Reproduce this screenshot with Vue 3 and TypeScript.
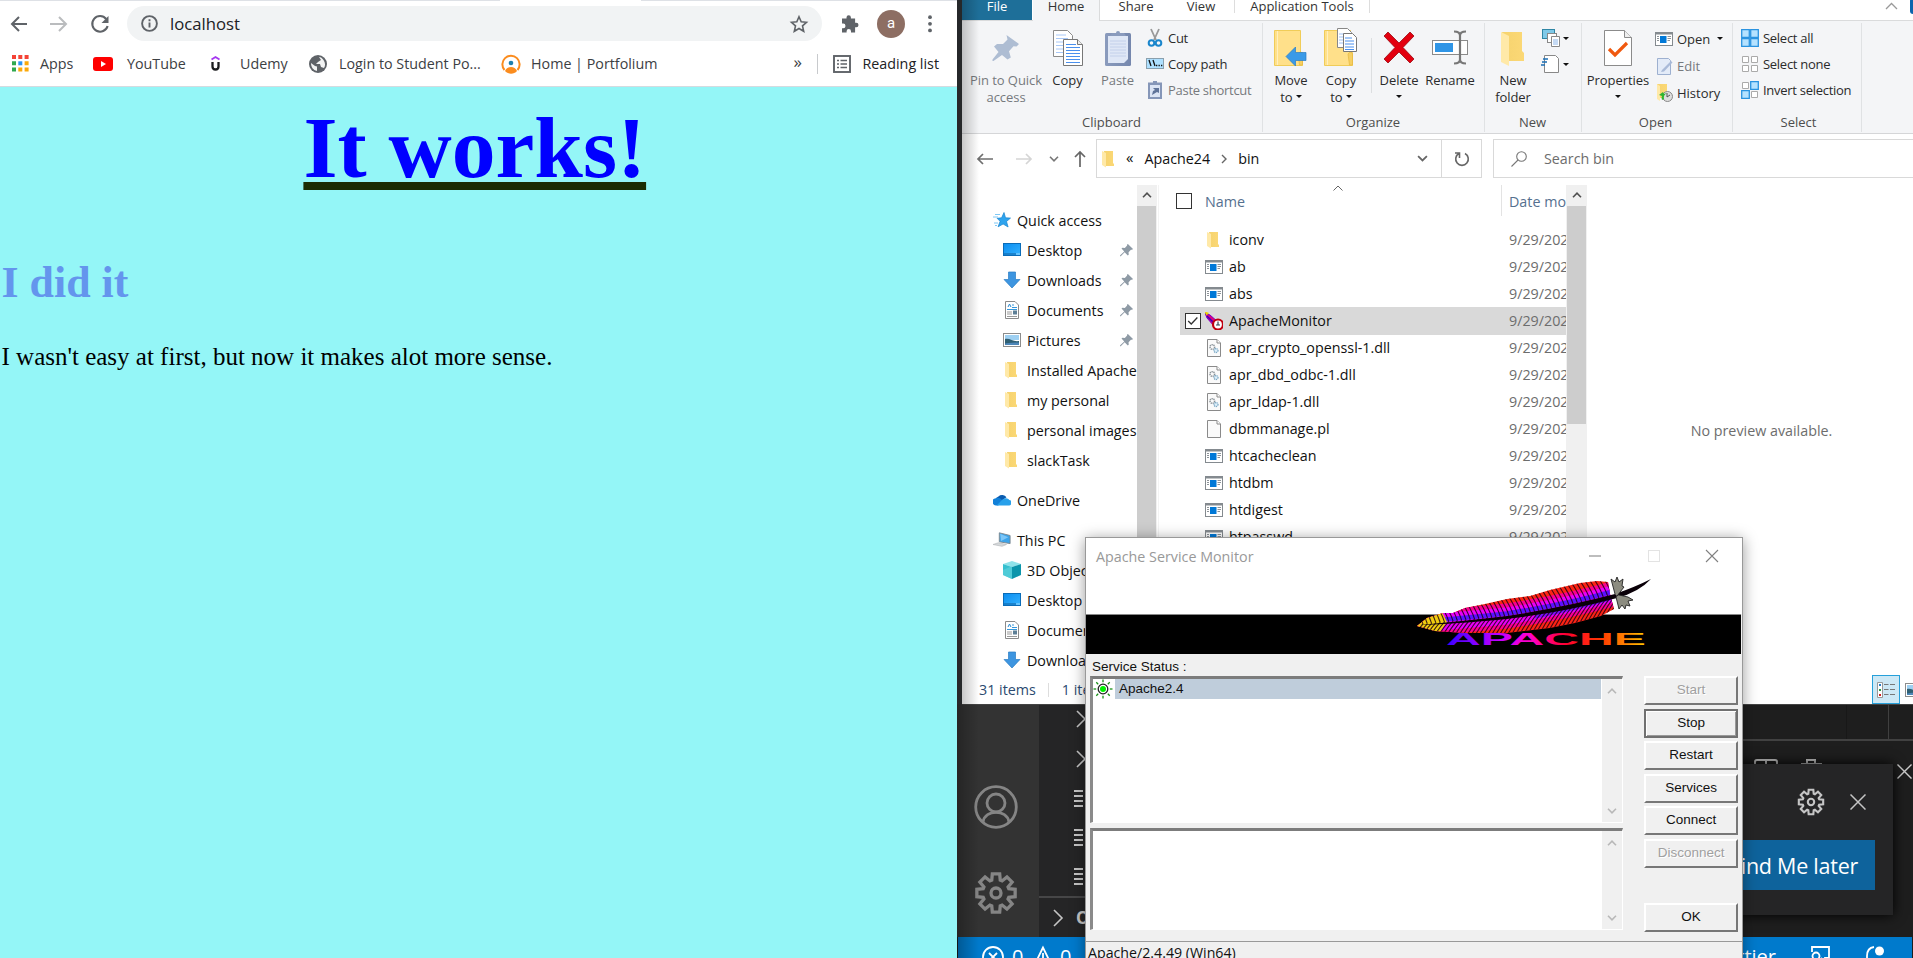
<script setup lang="ts">
interface NavItem { label: string; icon: string; root?: boolean; pinned?: boolean; gap?: boolean }
interface FileRow { name: string; icon: string; selected?: boolean }
interface DialogButton { label: string; disabled?: boolean; primary?: boolean; apart?: boolean }

const nav: NavItem[] = [
  { label: 'Quick access', icon: 'quick', root: true },
  { label: 'Desktop', icon: 'desktop', pinned: true },
  { label: 'Downloads', icon: 'download', pinned: true },
  { label: 'Documents', icon: 'document', pinned: true },
  { label: 'Pictures', icon: 'picture', pinned: true },
  { label: 'Installed Apache', icon: 'folder' },
  { label: 'my personal', icon: 'folder' },
  { label: 'personal images', icon: 'folder' },
  { label: 'slackTask', icon: 'folder' },
  { label: 'OneDrive', icon: 'onedrive', root: true, gap: true },
  { label: 'This PC', icon: 'pc', root: true, gap: true },
  { label: '3D Objects', icon: 'cube' },
  { label: 'Desktop', icon: 'desktop' },
  { label: 'Documents', icon: 'document' },
  { label: 'Downloads', icon: 'download' },
]

const files: FileRow[] = [
  { name: 'iconv', icon: 'folder' },
  { name: 'ab', icon: 'exe' },
  { name: 'abs', icon: 'exe' },
  { name: 'ApacheMonitor', icon: 'monitor', selected: true },
  { name: 'apr_crypto_openssl-1.dll', icon: 'dll' },
  { name: 'apr_dbd_odbc-1.dll', icon: 'dll' },
  { name: 'apr_ldap-1.dll', icon: 'dll' },
  { name: 'dbmmanage.pl', icon: 'page' },
  { name: 'htcacheclean', icon: 'exe' },
  { name: 'htdbm', icon: 'exe' },
  { name: 'htdigest', icon: 'exe' },
  { name: 'htpasswd', icon: 'exe' },
]

const buttons: DialogButton[] = [
  { label: 'Start', disabled: true },
  { label: 'Stop', primary: true },
  { label: 'Restart' },
  { label: 'Services' },
  { label: 'Connect' },
  { label: 'Disconnect', disabled: true },
  { label: 'OK', apart: true },
]

// Outline of an eight-toothed gear centred on the origin.
function gear(inner: number, outer: number): string {
  const pts: string[] = []
  for (let i = 0; i < 8; i++) {
    const a = (i * Math.PI) / 4
    for (const [da, r] of [[-0.32, inner], [-0.19, outer], [0.19, outer], [0.32, inner]]) {
      pts.push(`${(Math.sin(a + da) * r).toFixed(2)},${(-Math.cos(a + da) * r).toFixed(2)}`)
    }
  }
  return `M${pts.join('L')}Z`
}
const gearPath = gear(13.5, 19.5)

// Height of the quill at a given x, used as the root of every barb.
function spine(x: number): number {
  const pts = [[0, 49], [50, 44], [92, 40], [135, 34], [178, 25], [212, 15.7]]
  for (let i = 1; i < pts.length; i++) {
    if (x <= pts[i][0]) {
      const t = (x - pts[i - 1][0]) / (pts[i][0] - pts[i - 1][0])
      return pts[i - 1][1] + t * (pts[i][1] - pts[i - 1][1])
    }
  }
  return 15
}
const barbs = Array.from({ length: 50 }, (_, i) => {
  const x = 8 + i * 4.3
  const y = spine(x)
  return `M${x} ${y}q-3 -10 -13 -24M${x} ${y}q-6 6 -15 22`
}).join('')

const rays = [0, 45, 90, 135, 180, 225, 270, 315]
</script>

<template>
  <div class="screen">
    <svg class="defs" aria-hidden="true">
      <defs>
        <linearGradient id="gFolder" x1="0" x2="1"><stop offset="0" stop-color="#f6d36e" /><stop offset="1" stop-color="#fbd876" /></linearGradient>
        <linearGradient id="gDesk" x1="0" y1="0" x2="1" y2="1"><stop offset="0" stop-color="#0a8df0" /><stop offset="1" stop-color="#35b2ff" /></linearGradient>
        <linearGradient id="gApache" x1="0" x2="1">
          <stop offset="0" stop-color="#3a00ff" /><stop offset=".28" stop-color="#c800ff" /><stop offset=".42" stop-color="#ff00c8" />
          <stop offset=".6" stop-color="#ff0030" /><stop offset=".78" stop-color="#ff3a00" /><stop offset="1" stop-color="#ffc800" />
        </linearGradient>
        <linearGradient id="gClip" x1="0" x2="1"><stop offset="0" stop-color="#8a9bbd" /><stop offset="1" stop-color="#7587ad" /></linearGradient>
        <clipPath id="cFeather"><path d="M2 50L12 42L28 37L38 37L50 32L70 28L92 23L115 20L135 14L165 7L182 5L193 6L195 18L199 33L186 40L160 47L135 52L92 57L50 57L20 55Z" /></clipPath>
      </defs>
      <symbol id="i-folder" viewBox="0 0 18 18"><path d="M4 1h9v12l1 1v2H5z" fill="url(#gFolder)" /><path d="M2 1l4 2v14.500L2 15z" fill="#ffe9a8" /></symbol>
      <symbol id="i-exe" viewBox="0 0 18 18"><rect x=".5" y="2.500" width="17" height="13" fill="#fff" stroke="#848a8f" /><path d="M0 2h18v2.500H0z" fill="#848a8f" /><rect x="5" y="6" width="6.500" height="7" fill="#0078d7" /><path d="M2 6.500h2M2 8.500h2M2 10.500h2M12.500 6.500H16M12.500 8.500H16M12.500 10.500H15" stroke="#8d9398" /></symbol>
      <symbol id="i-page" viewBox="0 0 18 18"><path d="M2.500.5h9.500l3.500 3.500v13.500h-13z" fill="#fafafa" stroke="#8a8a8a" /><path d="M12 .5V4h3.500" fill="#fff" stroke="#8a8a8a" /></symbol>
      <symbol id="i-dll" viewBox="0 0 18 18"><path d="M2.500.5h9.500l3.500 3.500v13.500h-13z" fill="#fafafa" stroke="#8a8a8a" /><path d="M12 .5V4h3.500" fill="#fff" stroke="#8a8a8a" /><circle cx="7.300" cy="8" r="2.300" fill="none" stroke="#8a9298" stroke-dasharray="1.200 .6" stroke-width="1.500" /><circle cx="11" cy="11.500" r="2" fill="#dff0fa" stroke="#7aa7c4" stroke-dasharray="1.200 .6" stroke-width="1.300" /></symbol>
      <symbol id="i-monitor" viewBox="0 0 18 18"><path d="M0 1l2 5 7 8 4-4-8-7z" fill="#e0007a" stroke="#7a00c8" /><path d="M-1-1l5 2-2.500 2.500z" fill="#e8d400" /><path d="M2 4l8 8" stroke="#3a00c0" stroke-width="1.500" /><circle cx="13" cy="12.500" r="5" fill="#fff" stroke="#c00010" stroke-width="2.200" /><path d="M13 9.500v4M11 13h4" stroke="#345" stroke-width="1.200" /></symbol>
      <symbol id="i-quick" viewBox="0 0 18 18"><path d="M11 1.500l1.500 5.300 5 .3-4 3.400 1.600 5.500-5-3-5 2.800 2-5.500-3-3 4.500-.5z" fill="#2fa4ee" stroke="#1583cf" stroke-width=".7" /><path d="M2 3.500h5M0 6h5M1 12h4M2 14.500h2" stroke="#7ec8f5" /></symbol>
      <symbol id="i-desktop" viewBox="0 0 18 18"><rect x=".5" y="2.500" width="17" height="12" fill="url(#gDesk)" stroke="#0a6cb8" /><path d="M1 13h12" stroke="#0f5f9e" /><path d="M13.500 13h1M15.500 13h1" stroke="#fff" /></symbol>
      <symbol id="i-download" viewBox="0 0 18 18"><path d="M5.500 1h7v7.500H17L9 17 1 8.500h4.500z" fill="#3d95e0" stroke="#2a7cc4" stroke-width=".7" /></symbol>
      <symbol id="i-document" viewBox="0 0 18 18"><path d="M2.500.5h9.500l3.500 3.500v13.500h-13z" fill="#fff" stroke="#8a8a8a" /><path d="M5 6l1.500-3L8 6" fill="none" stroke="#2a8ad0" /><path d="M9 4h2M9 6.500h5M4 8.500h10" stroke="#3597dc" /><path d="M4 11h5M4 13h5M4 15.500h10" stroke="#999" /><rect x="10" y="9.500" width="4" height="4" fill="#5d7f96" /></symbol>
      <symbol id="i-picture" viewBox="0 0 18 18"><rect x=".5" y="2.500" width="17" height="13" fill="#fff" stroke="#8c8c8c" /><rect x="2" y="4" width="14" height="5" fill="#9ed0f2" /><path d="M2 8c5-1 8 3 14 2v4H2z" fill="#2f5f73" /><path d="M2 12.500c5-1 9-1 14-1V14H2z" fill="#4d86b8" /></symbol>
      <symbol id="i-onedrive" viewBox="0 0 20 14"><path d="M3 7a4.500 4.500 0 0 1 3-4A6 6 0 0 1 15 4L8 9z" fill="#0a5cb0" /><path d="M4 13a4 4 0 0 1-1-8c3-1 5 0 7 2l-4 6z" fill="#1180d8" /><path d="M10 7c4-4 8-1 8 0a3 3 0 0 1-1 6H4z" fill="#28a0ea" /></symbol>
      <symbol id="i-pc" viewBox="0 0 20 18"><path d="M7 1l12 3v9L7 11z" fill="#3da4ea" stroke="#7d868c" /><path d="M8 2l9 4-8 4z" fill="#7cc6f8" /><path d="M0 14l6-2 9 2-5 2z" fill="#d5d8da" stroke="#a9adb0" stroke-width=".6" /></symbol>
      <symbol id="i-cube" viewBox="0 0 18 18"><path d="M9 0l9 3-9 3-9-3z" fill="#8fe3ea" /><path d="M0 3l9 3v12l-9-4z" fill="#35c0cf" /><path d="M18 3L9 6v12l9-4z" fill="#0b95ab" /><path d="M0 9l9-4v13l-9-4z" fill="#69d6e0" opacity=".5" /></symbol>
      <symbol id="i-pin" viewBox="0 0 14 14"><path d="M8.500 0L14 5.500l-1 .8-1.200-.1-2.600 2.700.2 2.600-1 .9L5 9 .8 13.200 0 13.200l.2-1L4.600 8 1.600 4.900l1-.9 2.600.3 2.500-2.600-.2-1z" /></symbol>
      <symbol id="i-chev" viewBox="0 0 10 6"><path d="M1 .8l4 4 4-4" fill="none" stroke="currentColor" stroke-width="1.600" /></symbol>
      <symbol id="i-close" viewBox="0 0 16 16"><path d="M.5.5l15 15M15.500.5l-15 15" stroke="currentColor" stroke-width="1.500" /></symbol>
      <symbol id="i-gear" viewBox="-22 -22 44 44"><path :d="gearPath" fill="none" stroke="currentColor" stroke-width="3.300" /><circle r="5" fill="none" stroke="currentColor" stroke-width="3.300" /></symbol>
      <symbol id="i-bigfolder" viewBox="0 0 36 38"><path d="M1.500 1.500h26v22h2v13h-28z" fill="#ffe08a" stroke="#f0cc58" /><path d="M4.500 2v34" stroke="#fff0bd" /><path d="M25 25q3-4 4.500 0v11h-3z" fill="#f6cf63" stroke="#e5b840" stroke-width=".7" /></symbol>
    </svg>

    <!-- Code editor -->
    <section class="code">
      <div class="code-main">
        <div class="activity">
          <svg width="44" height="44" viewBox="-22 -22 44 44" fill="none" stroke="currentColor" stroke-width="2.800"><circle r="20.300" /><circle cy="-4" r="9" /><path d="M-13 15C-11 2 11 2 13 15" /></svg>
          <svg width="44" height="44"><use href="#i-gear" /></svg>
        </div>
        <div class="side">
          <div class="side-row first"><svg width="10" height="18" viewBox="0 0 10 18"><path d="M1 1l8 8-8 8" fill="none" stroke="currentColor" stroke-width="1.600" /></svg></div>
          <div class="side-row"><svg width="10" height="18" viewBox="0 0 10 18"><path d="M1 1l8 8-8 8" fill="none" stroke="currentColor" stroke-width="1.600" /></svg></div>
          <div v-for="n in 3" :key="n" class="side-row lines"><svg width="9" height="17" viewBox="0 0 9 17"><path d="M0 1h9M0 6h9M0 11h9M0 16h9" stroke="currentColor" stroke-width="2" /></svg></div>
          <div class="outline-row"><svg width="10" height="18" viewBox="0 0 10 18"><path d="M1 1l8 8-8 8" fill="none" stroke="currentColor" stroke-width="1.600" /></svg><b>OUTLINE</b></div>
        </div>
        <div class="editor">
          <div class="editor-top"><i class="tabshade"></i></div>
          <div class="panel-head">
            <svg width="24" height="24" viewBox="0 0 24 24"><path d="M1 24V3q0-2 2-2h18q2 0 2 2v21M12 1v23" fill="none" stroke="currentColor" stroke-width="2" /></svg>
            <svg width="21" height="24" viewBox="0 0 21 24"><path d="M6 5V1h8v4M0 5h21M3 5v19h15V5" fill="none" stroke="currentColor" stroke-width="2" /></svg>
            <svg class="panel-x" width="15" height="15"><use href="#i-close" /></svg>
          </div>
          <div class="toast">
            <div class="toast-icons"><svg width="28" height="28"><use href="#i-gear" /></svg><svg width="16" height="16"><use href="#i-close" /></svg></div>
            <div class="toast-btn">Remind Me later</div>
          </div>
        </div>
      </div>
      <div class="statusbar">
        <svg width="22" height="22" viewBox="-11 -11 22 22" fill="none" stroke="#fff" stroke-width="1.800"><circle r="10" /><path d="M-4-4L4 4M4-4L-4 4" /></svg><span class="zero">0</span>
        <svg width="18" height="20" viewBox="0 0 18 20" fill="none" stroke="#fff" stroke-width="1.800"><path d="M9 1.500L1 18h16zM9 7v6" /></svg><span class="zero">0</span>
        <span class="prettier">Prettier</span>
        <svg class="feedback" width="21" height="22" viewBox="0 0 21 22" fill="none" stroke="#fff" stroke-width="1.800"><path d="M3 6V1h17v11h-4v4l-4-4" /><circle cx="7" cy="10" r="3.500" /><path d="M1 22q0-7 6-7t6 7" /></svg>
        <svg width="20" height="22" viewBox="0 0 20 22" fill="none" stroke="#fff" stroke-width="1.800"><path d="M9 1Q2 2 2 10v7l-2 4h18l-2-4v-5" /><circle cx="14.500" cy="5" r="4.500" fill="#fff" stroke="none" /></svg>
      </div>
    </section>

    <!-- File explorer -->
    <section class="explorer">
      <div class="tabs">
        <span class="tab file">File</span><span class="tab home">Home</span><span class="tab share">Share</span><span class="tab view">View</span><span class="tab app">Application Tools</span>
        <svg class="collapse" width="13" height="8" viewBox="0 0 13 8"><path d="M1 7l5.500-5.500L12 7" fill="none" stroke="#999" stroke-width="1.300" /></svg><i class="help"></i>
      </div>
      <div class="ribbon">
        <div class="group clipboard">
          <div class="tools">
            <div class="big faded wpin"><svg width="38" height="38" viewBox="0 0 38 38" fill="#aebdd3"><path d="M19.500 6L32 15l-2.500 2.500-3-.3-4.500 5 1.800 6.300-3.300 2-5.500-4.500L6.500 32H5.500v-1.500L11.500 23l-4.500-5.500 3-2.500h6l4.500-4.500z" /></svg><span>Pin to Quick<br>access</span></div>
            <div class="big wcopy"><svg width="32" height="38" viewBox="0 0 32 38"><path d="M1.500 1.500h14l5 5v21h-19z" fill="#fff" stroke="#8b8b8b" /><path d="M4 6h10M4 9.500h12M4 13h12M4 16.500h12M4 20h12M4 23.500h12" stroke="#a8c8f8" /><path d="M11.500 10.500h14l5 5v21h-19z" fill="#fff" stroke="#777" /><path d="M25.500 10.500v5h5" fill="#eee" stroke="#777" /><path d="M14 15.500h10M14 18.500h14M14 21.500h14M14 24.500h14M14 27.500h14M14 30.500h14M14 33.500h14" stroke="#4a90ee" /></svg><span>Copy</span></div>
            <div class="big faded wpaste"><svg width="28" height="38" viewBox="0 0 28 38"><rect x="1" y="4" width="26" height="33" rx="1.500" fill="url(#gClip)" /><path d="M4 7h20v23l-4 4H4z" fill="#dfe7f6" /><path d="M6 12h16M6 15h16M6 18h16M6 21h16M6 24h16M6 27h16" stroke="#c3d0ea" /><path d="M6 7l2-3h4a2 2 0 0 1 4 0h4l2 3z" fill="#8a9bbd" /></svg><span>Paste</span></div>
            <div class="small-col wclip">
              <div><svg width="18" height="18" viewBox="0 0 18 18" fill="none"><path d="M5 0l5 11M13 0L8 11" stroke="#999" stroke-width="1.800" /><circle cx="5.500" cy="14" r="2.800" stroke="#1a86cc" stroke-width="2" /><circle cx="12.500" cy="14" r="2.800" stroke="#1a86cc" stroke-width="2" /></svg>Cut</div>
              <div><svg width="18" height="18" viewBox="0 0 18 18"><rect x=".5" y="3.500" width="17" height="10" fill="#aee0ff" stroke="#8aa0ae" /><path d="M3 5l2 6M7 5l2 6M10 10.500h1.300M12.500 10.500h1.300M15 10.500h1.300" stroke="#111" stroke-width="1.300" /></svg>Copy path</div>
              <div class="faded"><svg width="18" height="18" viewBox="0 0 18 18"><rect x="2" y="1.500" width="14" height="16.500" fill="#8596b8" /><rect x="4" y="4" width="10" height="12" fill="#dbe4f4" /><path d="M7 0h4v3H7z" fill="#8596b8" /><path d="M6 14l1-4 2-1-2-2h6v5l-2-1z" fill="#5f7399" /></svg>Paste shortcut</div>
            </div>
          </div><div class="label">Clipboard</div>
        </div>
        <div class="group organize">
          <div class="tools">
            <div class="big w48"><svg width="36" height="38" viewBox="0 0 36 38"><use href="#i-bigfolder" width="36" height="38" /><path d="M13 27.500l9.500-9.500v5.500H33v8H22.500V37z" fill="#3a9ae8" stroke="#2a7cc4" stroke-width=".7" /></svg><span>Move<br>to <i class="tri"></i></span></div>
            <div class="big w52"><svg width="36" height="38" viewBox="0 0 36 38"><use href="#i-bigfolder" width="36" height="38" /><path d="M14.500-.5h10l4 4v15h-14z" fill="#fff" stroke="#888" /><path d="M16 5h8M16 8h8M16 11h8M16 14h8" stroke="#9fc2f5" /><path d="M20.500 4.500h9l4 4v14h-13z" fill="#fff" stroke="#777" /><path d="M22 9h7M22 12h9M22 15h9M22 18h9M22 20.500h9" stroke="#4a90ee" /></svg><span>Copy<br>to <i class="tri"></i></span></div>
            <i class="vsep"></i>
            <div class="big w48"><svg width="36" height="38" viewBox="0 0 36 38"><path d="M3 7l4-4 11 11L29 3l4 4-11 11.500L33 30l-4 4-11-11L7 34l-4-4 11-11.500z" fill="#e3000f" stroke="#9b0a12" stroke-width=".8" /></svg><span>Delete<br><i class="tri"></i></span></div>
            <div class="big w54"><svg width="38" height="38" viewBox="0 0 38 38"><rect x="1.500" y="11.500" width="35" height="14" fill="#fff" stroke="#8a8a8a" /><rect x="4" y="14" width="18" height="9" fill="#2f95e6" /><path d="M23 2.500q6 0 6 4 0-4 6-4M29 5v27M23 34.500q6 0 6-4 0 4 6 4" fill="none" stroke="#777" stroke-width="2.200" /></svg><span>Rename</span></div>
          </div><div class="label">Organize</div>
        </div>
        <div class="group new">
          <div class="tools">
            <div class="big w48"><svg width="28" height="38" viewBox="0 0 28 38"><path d="M3 3h20v19l2 2v8H8z" fill="url(#gFolder)" /><path d="M2 3l8 4v30L2 33z" fill="#ffe9a8" /></svg><span>New<br>folder</span></div>
            <div class="small-col wnew">
              <div><svg width="20" height="18" viewBox="0 0 20 18"><rect x="1.500" y=".5" width="12" height="9" fill="#7fc9e8" stroke="#2f86a5" /><rect x="6.500" y="4.500" width="9" height="9" fill="#fff" stroke="#888" /><path d="M10.500 7.500h8v10h-8z" fill="#fff" stroke="#888" /><path d="M12 11h5M12 13h5M12 15h5" stroke="#8ab4e8" /></svg><i class="tri"></i></div>
              <div><svg width="20" height="18" viewBox="0 0 20 18"><path d="M3.500.5h11l3 3v14h-14z" fill="#fff" stroke="#888" /><path d="M2 4h5M1 7h5M0 10h4" stroke="#1b6fb5" stroke-width="1.300" /></svg><i class="tri"></i></div>
            </div>
          </div><div class="label">New</div>
        </div>
        <div class="group open">
          <div class="tools">
            <div class="big w68"><svg width="30" height="38" viewBox="0 0 30 38"><path d="M1.500 1.500h20l7 7v28h-27z" fill="#fff" stroke="#8b8b8b" /><path d="M21.500 1.500v7h7" fill="#eee" stroke="#8b8b8b" /><path d="M6 20l6 6 12-12" fill="none" stroke="#f0590f" stroke-width="3.200" /></svg><span>Properties<br><i class="tri"></i></span></div>
            <div class="small-col wopen">
              <div><svg width="18" height="18"><use href="#i-exe" /></svg>Open<i class="tri far"></i></div>
              <div class="faded"><svg width="18" height="18" viewBox="0 0 18 18"><path d="M2.500 1.500h11l2 2v14h-13z" fill="#e3ebf8" stroke="#9db0d0" /><path d="M7 13L16 4l1.500 1.500L9 14.500 6 15z" fill="#a9bad8" /></svg>Edit</div>
              <div><svg width="18" height="18" viewBox="0 0 18 18"><path d="M2 0h10v14H3z" fill="url(#gFolder)" /><path d="M2 0l3 2v15l-3-2z" fill="#ffe9a8" /><circle cx="12.500" cy="12.500" r="5" fill="#ddd" stroke="#888" /><path d="M12 9v4l3-2" stroke="#555" fill="none" /><path d="M4 11l4-3 1 2 3-1q-4 2-3 6l-2 1q-1-3 0-4z" fill="#2fb52f" /></svg>History</div>
            </div>
          </div><div class="label">Open</div>
        </div>
        <div class="group select">
          <div class="tools">
            <div class="small-col wsel">
              <div><svg width="18" height="18" viewBox="0 0 18 18" fill="#b5e2ff" stroke="#2a93e0" stroke-width="1.300"><path d="M.7.7h7.600v7.600H.7zM9.700.7h7.600v7.600H9.700zM.7 9.700h7.600v7.600H.7zM9.700 9.700h7.600v7.600H9.700z" /></svg>Select all</div>
              <div><svg width="18" height="18" viewBox="0 0 18 18" fill="#fff" stroke="#aaa"><path d="M1.500 1.500h6v6h-6zM10.500 1.500h6v6h-6zM1.500 10.500h6v6h-6zM10.500 10.500h6v6h-6z" /></svg>Select none</div>
              <div><svg width="18" height="18" viewBox="0 0 18 18" fill="#fff" stroke="#aaa"><path d="M1.500 1.500h6v6h-6zM10.500 10.500h6v6h-6z" /><path d="M9.700.7h7.600v7.600H9.700zM.7 9.700h7.600v7.600H.7z" fill="#b5e2ff" stroke="#2a93e0" stroke-width="1.300" /></svg>Invert selection</div>
            </div>
          </div><div class="label">Select</div>
        </div>
      </div>

      <div class="address-row">
        <svg class="a-back" width="16" height="12" viewBox="0 0 16 12" fill="none" stroke="#6e6e6e" stroke-width="1.700"><path d="M1 6h15M6 1L1 6l5 5" /></svg>
        <svg class="a-fwd" width="16" height="12" viewBox="0 0 16 12" fill="none" stroke="#d5d5d5" stroke-width="1.700"><path d="M0 6h15M10 1l5 5-5 5" /></svg>
        <svg class="a-hist" width="10" height="6"><use href="#i-chev" /></svg>
        <svg class="a-up" width="12" height="16" viewBox="0 0 12 16" fill="none" stroke="#666" stroke-width="1.700"><path d="M6 16V1M1 6l5-5 5 5" /></svg>
        <div class="address">
          <svg width="18" height="18"><use href="#i-folder" /></svg><span class="laquo">«</span><span class="crumb">Apache24</span>
          <svg class="sep" width="6" height="10" viewBox="0 0 6 10"><path d="M1 1l4 4-4 4" fill="none" stroke="#666" stroke-width="1.400" /></svg><span class="crumb">bin</span>
          <svg class="drop" width="11" height="7"><use href="#i-chev" /></svg>
          <div class="refresh"><svg width="16" height="16" viewBox="0 0 16 16" fill="none" stroke="#666" stroke-width="1.600"><path d="M11 2.500a6.300 6.300 0 1 1-6 0M5.500 7V2H1" /></svg></div>
        </div>
        <div class="search"><svg width="16" height="16" viewBox="0 0 16 16" fill="none" stroke="#777" stroke-width="1.100"><circle cx="10.500" cy="5.500" r="4.800" /><path d="M7 9l-6.500 6.500" /></svg>Search bin</div>
      </div>

      <div class="body">
        <div class="nav">
          <div v-for="(n, i) in nav" :key="i" class="nav-row" :class="{ root: n.root, gap: n.gap }">
            <svg width="18" height="18"><use :href="'#i-' + n.icon" /></svg><span>{{ n.label }}</span>
            <svg v-if="n.pinned" class="pin" width="13" height="13" fill="#8e9aa5"><use href="#i-pin" /></svg>
          </div>
        </div>
        <div class="scroll nav-scroll"><div class="arrow"><svg width="10" height="6"><use href="#i-chev" /></svg></div><div class="thumb"></div></div>
        <div class="list">
          <svg class="sort" width="10" height="6" viewBox="0 0 10 6"><path d="M.5 5.500L5 1l4.500 4.500" fill="none" stroke="#666" /></svg>
          <div class="list-head"><i class="box"></i><span class="name">Name</span><span class="date">Date modified</span></div>
          <div v-for="f in files" :key="f.name" class="file-row" :class="{ selected: f.selected }">
            <span class="check"><svg v-if="f.selected" class="box" width="16" height="16" viewBox="0 0 16 16"><path d="M2.500 8l3.500 3.500 7-7.500" fill="none" stroke="#333" stroke-width="1.500" /></svg></span>
            <svg width="18" height="18"><use :href="'#i-' + f.icon" /></svg><span class="fname">{{ f.name }}</span><span class="fdate">9/29/2021</span>
          </div>
        </div>
        <div class="scroll list-scroll"><div class="arrow"><svg width="10" height="6"><use href="#i-chev" /></svg></div><div class="thumb"></div></div>
        <div class="preview">No preview available.</div>
      </div>
      <div class="foot">
        <span>31 items</span><i></i><span>1 item selected</span>
        <div class="viewbtn"><svg width="18" height="16" viewBox="0 0 18 16"><path d="M.5.5h5v15h-5z" fill="#fff" stroke="#999" /><path d="M2 3h2" stroke="#2a7cc4" stroke-width="2" /><path d="M2 8h2" stroke="#2a9a4a" stroke-width="2" /><path d="M2 13h2" stroke="#d02020" stroke-width="2" /><path d="M7 2.500h4.500M13 2.500h5M7 7.500h4.500M13 7.500h5M7 12.500h4.500M13 12.500h5" stroke="#777" stroke-width="1.200" /></svg></div>
        <svg class="thumbs" width="18" height="18"><use href="#i-picture" /></svg>
      </div>
    </section>

    <!-- Browser -->
    <section class="browser">
      <div class="edge"><i></i></div>
      <div class="toolbar">
        <svg class="t-back" width="18" height="16" viewBox="0 0 18 16" fill="none" stroke="#5f6368" stroke-width="2"><path d="M2 8h15M9 1L2 8l7 7" /></svg>
        <svg class="t-fwd" width="18" height="16" viewBox="0 0 18 16" fill="none" stroke="#babcbe" stroke-width="2"><path d="M0 8h15M9 1l7 7-7 7" /></svg>
        <svg class="t-load" width="18" height="18" viewBox="0 0 18 18"><path d="M15.200 4A7.800 7.800 0 1 0 16.600 11" fill="none" stroke="#5f6368" stroke-width="2.100" /><path d="M17.500 1v7h-7z" fill="#5f6368" /></svg>
        <div class="omnibox">
          <svg width="17" height="17" viewBox="0 0 17 17"><circle cx="8.500" cy="8.500" r="7.400" fill="none" stroke="#5f6368" stroke-width="1.900" /><path d="M8.500 7.500v5M8.500 4.300v2" stroke="#5f6368" stroke-width="1.900" /></svg>
          <span>localhost</span>
          <svg class="star" width="18" height="18" viewBox="0 0 18 18"><path d="M9 1.800l2.200 5 5.300.5-4 3.600 1.200 5.400L9 13.500l-4.700 2.800 1.200-5.400-4-3.600 5.300-.5z" fill="none" stroke="#5f6368" stroke-width="1.600" /></svg>
        </div>
        <svg class="ext" width="18" height="18" viewBox="0 0 18 18" fill="#5f6368"><path d="M1 3.500h4.500v-1a2.200 2.200 0 0 1 4.400 0v1h4.200v4.300h1.200a2.200 2.200 0 0 1 0 4.400h-1.200v5.300H10v-1.200a2.200 2.200 0 0 0-4.400 0v1.200H1v-4.300h1.200a2.200 2.200 0 0 0 0-4.600H1z" /></svg>
        <span class="avatar">a</span>
        <svg width="4" height="18" viewBox="0 0 4 18" fill="#5f6368"><circle cx="2" cy="2.200" r="1.900" /><circle cx="2" cy="8.800" r="1.900" /><circle cx="2" cy="15.400" r="1.900" /></svg>
      </div>
      <div class="bookmarks">
        <svg class="b-apps" width="17" height="17" viewBox="0 0 17 17"><path d="M0 0h4v4H0zM6.300 0h4v4h-4zM12.600 0h4v4h-4z" fill="#f44336" /><path d="M0 6.300h4v4H0zM0 12.600h4v4H0z" fill="#2fa84f" /><path d="M6.300 6.300h4v4h-4z" fill="#2a94f4" /><path d="M12.600 6.300h4v4h-4zM6.300 12.600h4v4h-4zM12.600 12.600h4v4h-4z" fill="#fba90a" /></svg><span class="m-apps">Apps</span>
        <svg width="20" height="14" viewBox="0 0 20 14"><rect width="20" height="14" rx="3" fill="#f00" /><path d="M8 4l5 3-5 3z" fill="#fff" /></svg><span class="m-yt">YouTube</span>
        <svg width="9" height="15" viewBox="0 0 9 15" fill="none"><path d="M.5 3.500l4-2.500 4 2.500" stroke="#a435f0" stroke-width="1.800" /><path d="M1.500 6v4.500q0 3 3 3t3-3V6" stroke="#1c1d1f" stroke-width="2.300" /></svg><span class="m-ud">Udemy</span>
        <svg width="18" height="18" viewBox="0 0 18 18"><circle cx="9" cy="9" r="9" fill="#5f6368" /><path d="M2 8l4 3 2 .5v4.500C4 15 2 12 2 8zM10 2l2 3-3 2-2 2h4l1 3 3 1c1.500-2 1.500-5-.5-8C13 3 12 2.300 10 2z" fill="#fff" opacity=".92" /></svg><span class="m-login">Login to Student Po...</span>
        <svg width="20" height="20" viewBox="0 0 20 20"><path d="M3.500 16A8.600 8.600 0 1 1 16.500 16" fill="none" stroke="#fb8c1e" stroke-width="2" /><circle cx="10" cy="9" r="2.300" fill="#1d7fae" /><path d="M4 17c2-5.500 10-5.500 12 0-3 3.500-9 3.500-12 0z" fill="#fb8c1e" /></svg><span class="m-port">Home | Portfolium</span>
        <span class="more">»</span><i class="bsep"></i>
        <svg width="18" height="18" viewBox="0 0 18 18"><rect x="1" y="1" width="16" height="16" fill="none" stroke="#5f6368" stroke-width="1.900" /><path d="M4 5.500h2M4 9h2M4 12.500h2M7.500 5.500H14M7.500 9H14M7.500 12.500H14" stroke="#5f6368" stroke-width="1.700" /></svg><span class="m-read">Reading list</span>
      </div>
      <main class="page">
        <h1>It works!</h1>
        <h2>I did it</h2>
        <p>I wasn't easy at first, but now it makes alot more sense.</p>
      </main>
    </section>
    <div class="frame"></div>

    <!-- Apache Service Monitor -->
    <section class="dialog">
      <div class="title"><span>Apache Service Monitor</span>
        <svg width="12" height="12" viewBox="0 0 12 12"><path d="M0 6h12" stroke="#888" stroke-width="1.100" /></svg>
        <svg width="12" height="12" viewBox="0 0 12 12"><rect x=".5" y=".5" width="11" height="11" fill="none" stroke="#e3e3e3" /></svg>
        <svg width="12" height="12" viewBox="0 0 12 12"><path d="M0 0l12 12M12 0L0 12" stroke="#808080" stroke-width="1.100" /></svg>
      </div>
      <div class="banner">
        <svg class="feather" width="240" height="74" viewBox="0 0 240 74">
          <g clip-path="url(#cFeather)">
            <path d="M0 0h240v74H0z" fill="#fb2414" />
            <path d="M0 48Q50 44 92 40Q150 31 198 18" fill="none" stroke="#fa0090" stroke-width="25" />
            <path d="M25 46Q60 43 92 40Q150 31 198 18" fill="none" stroke="#e900f8" stroke-width="17" />
            <path d="M30 43.500Q60 41 92 37.500Q150 28.500 198 15.500" fill="none" stroke="#5a10ff" stroke-width="4.500" />
            <path d="M120 40Q160 32 198 21" fill="none" stroke="#7a10ff" stroke-width="5" />
            <path d="M0 30h24l8 16-10 14H0z" fill="#f0cc10" />
            <path :d="barbs" fill="none" stroke="#200012" stroke-width="1.100" opacity=".85" />
          </g>
          <path d="M4 49Q50 45 92 40Q150 31 200 18Q220 11 236 3Q224 16 202 22Q150 36 92 43Q40 48 4 49z" fill="#0a0008" />
          <path d="M200 18l-4-15 4 3 2-5 2 5 4-3-1 7 2 1-7 9M201 21l3 12 3-4 3 4 1-4 4 1-2-5 5-1-5-3-9-2" fill="#8c8c80" stroke="#222" stroke-width=".9" />
          <text x="31" y="68.500" textLength="200" lengthAdjust="spacingAndGlyphs" fill="url(#gApache)">APACHE</text>
        </svg>
      </div>
      <div class="dlg-body">
        <div class="left">
          <div class="caption">Service Status :</div>
          <div class="listbox services">
            <div class="svc">
              <svg width="22" height="20" viewBox="-10 -10 22 20"><g stroke="#169016" stroke-width="1.300"><path v-for="a in rays" :key="a" d="M0-6.800V-9.500" :transform="`rotate(${a})`" /></g><circle r="4.800" fill="#fff" stroke="#222" stroke-width="1.300" /><circle r="3" fill="#00f000" /></svg>
              <span>Apache2.4</span>
            </div>
            <div class="sbar"><svg width="10" height="6"><use href="#i-chev" /></svg><svg width="10" height="6"><use href="#i-chev" /></svg></div>
          </div>
          <div class="listbox log"><div class="svc"></div><div class="sbar"><svg width="10" height="6"><use href="#i-chev" /></svg><svg width="10" height="6"><use href="#i-chev" /></svg></div></div>
        </div>
        <div class="btns"><div v-for="b in buttons" :key="b.label" class="btn" :class="{ disabled: b.disabled, primary: b.primary, apart: b.apart }">{{ b.label }}</div></div>
      </div>
      <div class="dlg-foot">Apache/2.4.49 (Win64)</div>
    </section>
  </div>
</template>

<style>
body { margin: 0; overflow: hidden; }
</style>

<style scoped>
* { box-sizing: border-box; }
svg { flex: none; display: block; overflow: visible; }
.screen { position: relative; width: 1913px; height: 958px; overflow: hidden; background: #1e1e1e; font-family: "Open Sans", "Noto Sans", sans-serif; font-size: 14.3px; color: #111; white-space: nowrap; }
.defs { position: absolute; width: 0; height: 0; }

/* Browser */
.browser { position: absolute; left: 0; top: 0; width: 957px; height: 958px; background: #fff; display: flex; flex-direction: column; }
.edge { height: 1px; background: #dee1e6; }
.edge i { display: block; width: 141px; height: 1px; margin-left: 500px; background: #fff; }
.toolbar { height: 45px; display: flex; align-items: center; }
.t-back { margin-left: 10px; }
.t-fwd { margin-left: 22px; }
.t-load { margin-left: 23px; }
.omnibox { margin-left: 18px; width: 695px; height: 35px; border-radius: 18px; background: #f1f3f4; display: flex; align-items: center; padding: 0 14px; font-size: 16.700px; color: #202124; }
.omnibox span { margin-left: 12px; }
.star { margin-left: auto; }
.ext { margin-left: 19px; }
.avatar { width: 28px; height: 28px; margin: 0 23px 0 18px; border-radius: 50%; background: #8d6e63; color: #fff; font: 15px/27px Roboto, sans-serif; text-align: center; }
.bookmarks { height: 40px; display: flex; align-items: center; padding-bottom: 5px; color: #3c4043; font-size: 14.300px; }
.b-apps { margin-left: 12px; }
.bookmarks span { margin-left: 11px; flex: none; }
.bookmarks .m-apps { width: 53px; }
.bookmarks .m-yt { margin-left: 14px; width: 84px; }
.bookmarks .m-ud { margin-left: 20px; width: 69px; }
.bookmarks .m-login { margin-left: 12px; width: 162px; }
.bookmarks .m-port { margin-left: 10px; }
.bookmarks .more { margin-left: auto; width: 24px; font-size: 17px; padding-bottom: 4px; }
.bsep { width: 1px; height: 20px; background: #c8cacd; margin-right: 15px; }
.bookmarks .m-read { margin-right: 18px; color: #202124; }
.page { flex: 1; border-top: 1px solid #d5dbe0; background: #94f6f7; padding: 0 9px 0 1.500px; font-family: "Liberation Serif", serif; color: #000; white-space: normal; }
.page h1 { margin: 11px 0 0; text-align: center; font-size: 87.500px; line-height: 100px; color: #00f; text-decoration: underline #1b2d04 8px; text-underline-offset: 5px; }
.page h2 { margin: 59px 0 0; font-size: 43.900px; line-height: 50px; color: #6495ed; }
.page p { margin: 36px 0 0; font-size: 25px; line-height: 28px; }
.frame { position: absolute; left: 957px; top: 0; width: 22px; height: 958px; background: linear-gradient(90deg, #26282a 5px, transparent 5px) 0 0 / 100% 704px no-repeat, linear-gradient(90deg, rgba(0,0,0,.28), rgba(0,0,0,0)); }

/* Explorer */
.explorer { position: absolute; left: 962px; top: 0; width: 951px; height: 705px; background: #fff; border-bottom: 1px solid #444; display: flex; flex-direction: column; overflow: hidden; }
.tabs { height: 21px; border-bottom: 1px solid #dadbdc; display: flex; align-items: flex-start; font-size: 13px; line-height: 13px; color: #333; }
.tab { height: 20px; text-align: center; }
.file { width: 70px; background: #1e6f99; color: #fff; }
.home { width: 67px; margin: 0 1px; height: 21px; background: #f4f5f7; border-right: 1px solid #dadbdc; }
.share { width: 70px; }
.view { width: 64px; border-right: 1px solid #ddd; height: 13px; padding-right: 3px; }
.app { width: 135px; height: 13px; border-right: 1px solid #ddd; }
.collapse { margin: 2px 12px 0 auto; }
.help { width: 3px; height: 16px; margin-top: -2px; border-radius: 3px 0 0 3px; background: #0a64ad; }
.ribbon { height: 113px; background: #f4f5f7; border-bottom: 1px solid #d5d6d8; display: flex; color: #2b2b2b; font-size: 13px; }
.group { position: relative; height: 109px; display: flex; flex-direction: column; margin-top: 2px; border-right: 1px solid #e0e2e4; }
.clipboard { width: 301px; padding-left: 4px; }
.organize { width: 222px; padding-left: 4px; }
.new { width: 97px; padding-left: 4px; }
.open { width: 151px; padding-left: 2px; }
.select { width: 129px; padding-left: 8px; }
.tools { display: flex; height: 87px; }
.label { text-align: center; line-height: 24px; color: #4d4d4d; padding: 2px 5px 0 0; margin-bottom: -2px; }
.big { display: flex; flex-direction: column; align-items: center; padding-top: 6px; line-height: 17px; text-align: center; }
.big span { margin-top: 5px; letter-spacing: -.05px; }
.faded { color: #76797d; }
.wpin { width: 80px; }
.wcopy { width: 43px; }
.wpaste { width: 57px; }
.w48 { width: 48px; }
.w52 { width: 52px; }
.w54 { width: 54px; }
.w68 { width: 68px; }
.tri { display: inline-block; border: 3.500px solid transparent; border-top-color: #111; border-bottom: 0; vertical-align: 4px; }
.vsep { width: 1px; height: 55px; margin: 15px 3px 0 4px; background: #dcdee0; }
.small-col { padding-top: 2px; letter-spacing: -.28px; }
.small-col > div { height: 26px; display: flex; align-items: center; gap: 4px; }
.wnew { margin-left: 4px; }
.wnew > div { gap: 2px; }
.wopen { margin-left: 3px; letter-spacing: 0; }
.wopen > div { height: 27px; }
.far { margin-left: 3px; }
.address-row { height: 51px; display: flex; padding-top: 5px; align-items: flex-start; }
.a-back { margin: 14px 0 0 15px; }
.a-fwd { margin: 14px 0 0 23px; }
.a-hist { margin: 17px 0 0 17px; color: #777; }
.a-up { margin: 12px 0 0 15px; }
.address { margin-left: 10px; width: 386px; height: 39px; border: 1px solid #d9d9d9; display: flex; align-items: center; padding-left: 3px; }
.laquo { margin: 0 11px 3px 8px; font-size: 15px; }
.sep { margin: 0 11px; }
.crumb { color: #111; }
.drop { margin-left: auto; margin-right: 13px; color: #666; }
.refresh { width: 40px; height: 37px; border-left: 1px solid #d9d9d9; display: grid; place-items: center; }
.search { margin-left: 11px; flex: 1; height: 39px; border: 1px solid #d9d9d9; border-right: 0; display: flex; align-items: center; gap: 17px; padding-left: 17px; color: #6d6d6d; }
.body { height: 490px; display: flex; overflow: hidden; }
.nav { width: 175px; padding-top: 20px; overflow: hidden; }
.nav-row { height: 30px; display: flex; align-items: center; padding-left: 40.500px; gap: 6.500px; }
.nav-row.root { padding-left: 31px; gap: 6px; }
.nav-row.gap { margin-top: 10px; }
.pin { margin-left: auto; margin-right: 4px; }
.scroll { background: #f0f0f0; display: flex; flex-direction: column; }
.arrow { height: 21px; display: grid; place-items: center; color: #505050; transform: scaleY(-1); }
.thumb { background: #cdcdcd; }
.nav-scroll { width: 20px; border-right: 1px solid #f0f0f0; }
.nav-scroll .thumb { flex: 1; }
.list { position: relative; width: 408px; padding-left: 21px; overflow: hidden; border-left: 1px solid #f3f3f3; margin-left: 1px; }
.sort { position: absolute; left: 174px; top: 0; }
.list-head { height: 41px; display: flex; align-items: flex-start; line-height: 33px; color: #55708f; margin-left: -4px; }
.box { flex: none; width: 16px; height: 16px; border: 1.500px solid #333; background: #fff; }
.list-head .box { margin-top: 8px; }
.name { flex: none; margin-left: 13px; width: 297px; height: 31px; border-right: 1px solid #e3e3e3; }
.date { padding-left: 7px; }
.file-row { height: 27px; display: flex; align-items: center; }
.file-row.selected { background: #d9d9d9; box-shadow: 0 1px #d9d9d9; }
.check { flex: none; width: 25px; padding-left: 5px; }
.check .box { overflow: hidden; }
.fname { flex: none; margin-left: 6px; width: 280px; }
.fdate { color: #6d6d6d; }
.list-scroll { width: 21px; padding-left: 1px; }
.list-scroll .thumb { height: 218px; margin-right: 1px; }
.preview { flex: 1; text-align: center; color: #6d6d6d; padding: 236px 0 0 23px; }
.foot { height: 29px; display: flex; align-items: center; color: #2b4a70; padding-left: 17px; }
.foot i { width: 1px; height: 14px; background: #ddd; margin: 0 13px 0 12px; }
.viewbtn { width: 28px; height: 29px; margin-left: auto; background: #cde8f5; border: 1px solid #26a0da; display: grid; place-items: center; }
.thumbs { margin: 0 -10px 0 5px; }

/* Code editor */
.code { position: absolute; left: 957px; top: 704px; width: 956px; height: 254px; background: #1e1e1e; overflow: hidden; }
.code-main { height: 233px; display: flex; }
.activity { width: 82px; background: #333; color: #858585; display: flex; flex-direction: column; align-items: center; gap: 42px; padding: 81px 4px 0 0; }
.side { width: 60px; background: #252526; color: #c5c5c5; }
.side-row { height: 40px; display: flex; align-items: center; padding-left: 37px; }
.side-row.first { height: 35px; padding-bottom: 5px; }
.side-row.lines { height: 39px; padding-left: 35px; }
.outline-row { height: 41px; border-top: 2px solid #464647; display: flex; align-items: center; gap: 13px; padding-left: 14px; font-size: 17px; }
.editor { position: relative; flex: 1; }
.editor-top { height: 35px; display: flex; justify-content: flex-end; }
.tabshade { width: 67px; background: linear-gradient(90deg, #1e1e1e 41px, #404040 41px, #404040 42px, #1e1e1e 42px); border-left: 1px solid #181818; }
.panel-head { height: 200px; border-top: 2px solid #414141; display: flex; justify-content: flex-end; padding: 18px 1px 0; gap: 23px; color: #c5c5c5; }
.panel-x { margin: 5px 0 0 52px; color: #ccc; }
.toast { position: absolute; right: 20px; top: 60px; width: 520px; height: 151px; background: #252526; box-shadow: 0 0 12px #000; display: flex; flex-direction: column; align-items: flex-end; padding: 24px 18px; color: #c5c5c5; }
.toast-icons { display: flex; align-items: center; gap: 25px; padding-right: 9.500px; }
.toast-btn { margin-top: 24px; width: 200px; height: 50px; background: #0e639c; color: #fff; font-size: 21.500px; letter-spacing: -.25px; line-height: 52px; text-align: right; padding-right: 17px; }
.statusbar { height: 60px; background: #007acc; color: #fff; display: flex; align-items: flex-start; padding: 9px 27px 0 24px; font-size: 20px; margin: 0 1px; }
.zero { width: 22px; margin: -3px 0 0 8px; line-height: 28px; }
.prettier { margin: -2px 0 0 auto; line-height: 26px; }
.feedback { margin: 0 35px 0 33px; }

/* Dialog */
.dialog { position: absolute; left: 1085px; top: 537px; width: 658px; height: 430px; background: #f0f0f0; border: 1px solid #999; box-shadow: 0 2px 14px rgba(0,0,0,.4); font-family: "Liberation Sans", Arial, sans-serif; font-size: 13.500px; }
.title { height: 76px; background: #fff; display: flex; align-items: flex-start; padding: 12px 24px 0 10px; font-family: "Open Sans", sans-serif; font-size: 14.300px; line-height: 13px; color: #999; }
.title span { margin-right: auto; }
.title svg { margin-left: 46.500px; }
.banner { position: relative; height: 40px; width: 655px; background: #000; border-top: 1px solid #888; }
.feather { position: absolute; left: 329px; top: -39px; }
.feather text { font-family: "Liberation Sans", Arial, sans-serif; font-weight: bold; font-size: 17px; }
.dlg-body { height: 287px; display: flex; padding: 0 4px; }
.left { width: 535px; }
.caption { height: 22px; line-height: 25px; padding-left: 2px; }
.listbox { width: 533px; background: #fff; border: 1px solid #a0a0a0; border-top: 3px solid #7c7c7c; border-left: 3px solid #8a8a8a; border-right-color: #fff; border-bottom-color: #fff; display: flex; }
.services { height: 147px; }
.log { height: 102px; margin-top: 5px; }
.svc { flex: 1; display: flex; align-items: flex-start; }
.svc span { flex: 1; height: 20px; line-height: 19px; background: #bfcddb; padding-left: 4px; margin-right: 1px; }
.sbar { width: 20px; background: #f0f0f0; color: #b8b8b8; display: flex; flex-direction: column; align-items: center; justify-content: space-between; padding: 9px 0 8px; }
.sbar svg:first-child { transform: scaleY(-1); }
.btns { margin-left: 20px; padding-top: 22px; width: 94px; display: flex; flex-direction: column; gap: 3.500px; }
.btn { height: 29px; line-height: 24px; text-align: center; background: #f0f0f0; border: 2px solid #fff; border-right-color: #777; border-bottom-color: #777; }
.btn.primary { border-color: #707070; box-shadow: inset 1px 1px #fff, inset -1px -1px #999; }
.btn.disabled { color: #a0a0a0; text-shadow: 1px 1px #fff; }
.btn.apart { margin-top: 32px; }
.dlg-foot { border-top: 1px solid #999; padding-left: 2px; line-height: 22px; font-family: "Open Sans", sans-serif; font-size: 14.200px; }
</style>
